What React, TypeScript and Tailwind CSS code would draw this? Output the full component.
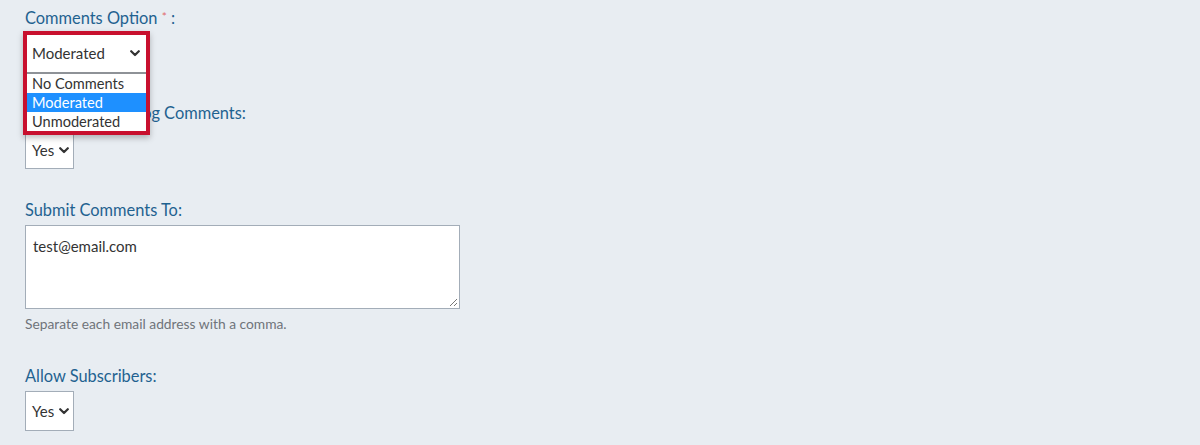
import React from 'react';

const font = { fontFamily: 'Lato, "Noto Sans", sans-serif' };

function Chevron() {
  return (
    <svg width="10" height="7" viewBox="0 0 10 7" className="shrink-0">
      <path d="M1.2 1.2 L5 5 L8.8 1.2" fill="none" stroke="#333" strokeWidth="2.2" strokeLinecap="round" strokeLinejoin="round" />
    </svg>
  );
}

function FakeSelect({ value, width }: { value: string; width: string }) {
  return (
    <div className={`flex h-[38px] items-center justify-between border border-[#a3adb8] bg-white pl-[6px] pr-[4px] text-[15px] text-[#333] ${width}`}>
      <span>{value}</span>
      <Chevron />
    </div>
  );
}

function Label({ children }: { children: React.ReactNode }) {
  return <div className="h-[20px] text-[16.4px] leading-[20px] text-[#1f6290]">{children}</div>;
}

export default function App() {
  const options = ['No Comments', 'Moderated', 'Unmoderated'];

  return (
    <div className="relative min-h-[445px] bg-[#e8edf2] pl-[25px] pt-[8px]" style={font}>
      {/* Comments Option */}
      <div>
        <Label>
          Comments Option <span className="relative top-[-3px] text-[12px] leading-none text-[#e06b6b]">*</span> :
        </Label>
        <div className="mt-[6px]">
          <FakeSelect value="Moderated" width="w-[119px]" />
        </div>
      </div>

      {/* Allow Blog Comments (partly under the open menu) */}
      <div className="mt-[31px]">
        <Label>Enable Visitor Blog Comments:</Label>
        <div className="mt-[8px]">
          <FakeSelect value="Yes" width="w-[49px]" />
        </div>
      </div>

      {/* Submit Comments To */}
      <div className="mt-[31px]">
        <Label>Submit Comments To:</Label>
        <div className="relative mt-[5px] h-[84px] w-[435px] border border-[#a3adb8] bg-white px-[7px] pt-[9px] text-[15px] text-[#333]">
          test@email.com
          <svg width="10" height="10" viewBox="0 0 10 10" className="absolute bottom-[1px] right-[1px]">
            <path d="M9 2 L2 9 M9 6 L6 9" stroke="#777" strokeWidth="1" />
          </svg>
        </div>
        <div className="mt-[7px] text-[13.8px] leading-[16px] text-[#6f747a]">Separate each email address with a comma.</div>
      </div>

      {/* Allow Subscribers */}
      <div className="mt-[34px]">
        <Label>Allow Subscribers:</Label>
        <div className="mt-[5px]">
          <FakeSelect value="Yes" width="w-[49px] h-[40px]" />
        </div>
      </div>

      {/* Highlighted open dropdown */}
      <div className="absolute left-[23px] top-[31px] w-[127px] border-[4px] border-[#c8102e] bg-white shadow-[0_3px_6px_rgba(0,0,0,0.25)]">
        <div className="flex h-[37px] items-center justify-between pl-[5px] pr-[6px] text-[15px] text-[#333]">
          <span>Moderated</span>
          <Chevron />
        </div>
        <div className="border-t-2 border-[#8e9297]">
          {options.map((o) => (
            <div
              key={o}
              className={`h-[19px] pl-[5px] text-[14.6px] leading-[19px] ${o === 'Moderated' ? 'bg-[#1e90ff] text-white' : 'text-[#333]'}`}
            >
              {o}
            </div>
          ))}
        </div>
      </div>
    </div>
  );
}
